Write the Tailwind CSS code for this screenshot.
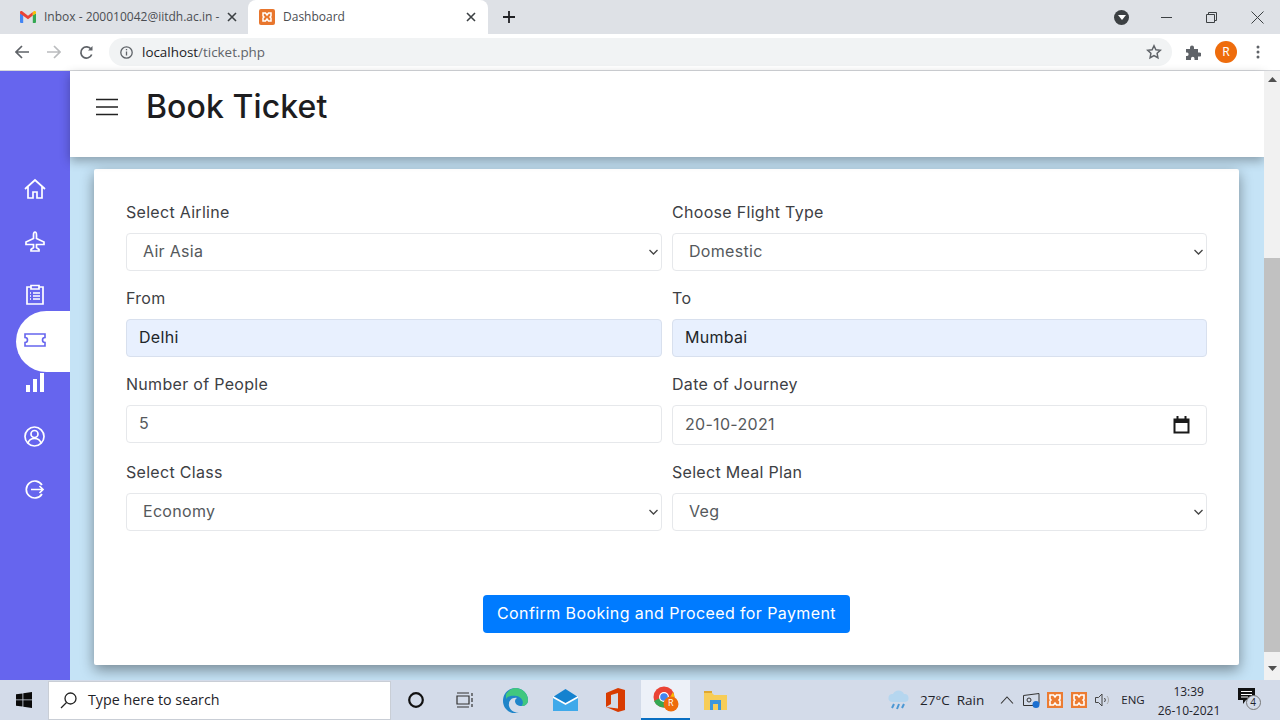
<!DOCTYPE html>
<html lang="en">
<head>
    <meta charset="UTF-8">
    <meta name="viewport" content="width=device-width, initial-scale=1.0">
    <script src="https://cdn.jsdelivr.net/npm/@tailwindcss/browser@4"></script>
    <title>Dashboard</title>
</head>
<body class="w-[1280px] h-[720px] overflow-hidden flex flex-col font-['Noto_Sans',sans-serif] bg-white">

    <!-- browser tabs -->
    <div class="h-[34px] shrink-0 bg-[#dee1e6] flex items-end pl-2 font-['Open_Sans',sans-serif] text-[12px] text-[#4a4d52]">
        <div class="w-[240px] h-[34px] flex items-center pl-3 pr-[11px]">
            <svg class="w-4 h-3 shrink-0" viewBox="0 0 16 12"><path d="M0 2.500V11a1 1 0 0 0 1 1h2.200V4z" fill="#4285f4"/><path d="M16 2.500V11a1 1 0 0 1-1 1h-2.200V4z" fill="#34a853"/><path d="M0 1.500C0 .2 1.500-.3 2.500.5L8 4.700 12.800 1v3.600L8 8.200 0 2.500z" fill="#ea4335"/><path d="M12.800 1l.7-.5C14.500-.3 16 .2 16 1.500v1l-3.200 2.100z" fill="#fbbc04"/></svg>
            <span class="ml-2 whitespace-nowrap">Inbox - 200010042@iitdh.ac.in -</span>
            <svg class="w-[10px] h-[10px] ml-auto" viewBox="0 0 10 10" stroke="#3c4043" stroke-width="1.600"><path d="M1 1l8 8M9 1l-8 8"/></svg>
        </div>
        <div class="w-[240px] h-[34px] bg-white rounded-t-lg flex items-center pl-[11px] pr-[12px]">
            <svg class="w-4 h-4 shrink-0" viewBox="0 0 16 16"><rect width="16" height="16" rx="2" fill="#e8762d"/><path d="M4 4h2.500l1.500 2 1.500-2H12v3l-1 1 1 1v3H9.500L8 10l-1.500 2H4V9l1-1-1-1z" fill="none" stroke="#fff" stroke-width="1.500"/></svg>
            <span class="ml-2">Dashboard</span>
            <svg class="w-[10px] h-[10px] ml-auto" viewBox="0 0 10 10" stroke="#3c4043" stroke-width="1.600"><path d="M1 1l8 8M9 1l-8 8"/></svg>
        </div>
        <div class="h-[34px] flex items-center ml-[15px]">
            <svg class="w-3 h-3" viewBox="0 0 12 12" stroke="#202124" stroke-width="1.800"><path d="M6 0v12M0 6h12"/></svg>
        </div>
        <div class="ml-auto h-[34px] flex items-center">
            <span class="w-[15px] h-[15px] rounded-full bg-[#3c4043] flex items-center justify-center">
                <svg class="w-2 h-[5px]" viewBox="0 0 8 5"><path d="M0 0h8L4 5z" fill="#fff"/></svg>
            </span>
            <svg class="w-[11px] h-[11px] ml-[32px]" viewBox="0 0 11 11" stroke="#3c4043"><path d="M0 5.500h11"/></svg>
            <svg class="w-[11px] h-[11px] ml-[34px]" viewBox="0 0 11 11" fill="none" stroke="#3c4043"><path d="M.5 2.500h8v8h-8zM2.500 2.500V.5h8v8H8.500"/></svg>
            <svg class="w-[13px] h-[13px] ml-[34px] mr-[16px]" viewBox="0 0 13 13" stroke="#3c4043"><path d="M.5.5l12 12M12.500.5l-12 12"/></svg>
        </div>
    </div>

    <!-- browser toolbar -->
    <div class="h-[37px] shrink-0 bg-white border-b border-[#d5d7db] flex items-center pl-[15px]">
        <svg class="w-[14px] h-[14px]" viewBox="0 0 14 14" fill="none" stroke="#5f6368" stroke-width="1.700"><path d="M14 7H1.500M7 1L1 7l6 6"/></svg>
        <svg class="w-[14px] h-[14px] ml-[18px]" viewBox="0 0 14 14" fill="none" stroke="#babcbe" stroke-width="1.700"><path d="M0 7h12.500M7 1l6 6-6 6"/></svg>
        <svg class="w-[15px] h-[15px] ml-[18px]" viewBox="0 0 15 15" fill="none" stroke="#5f6368" stroke-width="1.700"><path d="M12.700 9.500a5.600 5.600 0 1 1-.6-5.200"/><path d="M13.500 1v4.600H9z" fill="#5f6368" stroke="none"/></svg>
        <div class="ml-[15px] w-[1063px] h-[28px] rounded-full bg-[#f1f3f4] flex items-center pl-[11px] pr-[10px]">
            <svg class="w-[13px] h-[13px]" viewBox="0 0 13 13" fill="none" stroke="#5f6368" stroke-width="1.300"><circle cx="6.500" cy="6.500" r="5.700"/><path d="M6.500 5.500v4M6.500 3v1.300"/></svg>
            <span class="ml-[9px] text-[13.400px] text-[#202124] font-['Open_Sans',sans-serif]">localhost<span class="text-[#5f6368]">/ticket.php</span></span>
            <svg class="w-[16px] h-[16px] ml-auto" viewBox="0 0 16 16" fill="none" stroke="#5f6368" stroke-width="1.500"><path d="M8 1.800l1.900 4 4.400.5-3.200 3 .8 4.400L8 11.500l-3.900 2.200.8-4.400-3.200-3 4.400-.5z"/></svg>
        </div>
        <svg class="w-[15px] h-[15px] ml-[14px]" viewBox="0 0 15 15" fill="#5f6368"><path d="M0 4h4V2.500a2 2 0 0 1 4 0V4h4v3.500h1.500a2 2 0 0 1 0 4H12V15H8.500v-1.500a1.700 1.700 0 0 0-3.500 0V15H0v-4h1.200a1.800 1.800 0 0 0 0-3.500H0z"/></svg>
        <span class="ml-[14px] w-[22px] h-[22px] rounded-full bg-[#ee6c0c] text-white text-[12px] flex items-center justify-center">R</span>
        <svg class="w-[4px] h-[14px] ml-[19px]" viewBox="0 0 4 14" fill="#5f6368"><circle cx="2" cy="2" r="1.500"/><circle cx="2" cy="7" r="1.500"/><circle cx="2" cy="12" r="1.500"/></svg>
    </div>

    <!-- page -->
    <div class="flex-1 min-h-0 flex bg-[#c5e3f6]">
        <aside class="w-[70px] shrink-0 bg-[#6665ee] flex flex-col items-end text-white pt-[92px]">
            <div class="h-[52px] w-full flex items-center pl-[24px]">
                <svg class="w-[22px] h-[22px]" viewBox="0 0 22 22" fill="none" stroke="#fff" stroke-width="1.700"><path d="M1 11L11 2l10 9M4 9v11h5v-6h4v6h5V9"/></svg>
            </div>
            <div class="h-[53px] w-full flex items-center pl-[25px]">
                <svg class="w-[20px] h-[21px]" viewBox="0 0 20 21" fill="none" stroke="#fff" stroke-width="1.700"><path d="M10 1c1 0 1.500 1.500 1.500 3v3.500L19 11v2.500H11.500v3L14 18.500V20H6v-1.500l2.500-2v-3H1V11l7.500-3.500V4C8.500 2.500 9 1 10 1z"/></svg>
            </div>
            <div class="h-[52px] w-full flex items-center pl-[26px]">
                <svg class="w-[18px] h-[21px]" viewBox="0 0 18 21" fill="none" stroke="#fff" stroke-width="1.700"><path d="M5 3H1v17h16V3h-4"/><path d="M5 1.500h8v3.500H5zM4 9h1M7 9h7M4 12h1M7 12h7M4 15h1M7 15h7"/></svg>
            </div>
            <div class="h-[61px] w-[54px] bg-white rounded-l-[31px] flex items-center pl-[8px] pb-[3px] -mt-[9px]">
                <svg class="w-[22px] h-[14px]" viewBox="0 0 22 14" fill="none" stroke="#6665ee" stroke-width="1.600"><path d="M1 1h20v3.500a2.500 2.500 0 0 0 0 5V13H1V9.500a2.500 2.500 0 0 0 0-5z"/></svg>
            </div>
            <div class="h-[24px] w-full flex items-center pl-[26px] pb-[3px]">
                <svg class="w-[18px] h-[19px]" viewBox="0 0 18 19" fill="#fff"><path d="M0 12h4v7H0zM7 6h4v13H7zM14 0h4v19h-4z"/></svg>
            </div>
            <div class="h-[64px] w-full flex items-center pl-[24px] mt-[8px]">
                <svg class="w-[21px] h-[21px]" viewBox="0 0 21 21" fill="none" stroke="#fff" stroke-width="1.700"><circle cx="10.500" cy="10.500" r="9.500"/><circle cx="10.500" cy="8" r="3.500"/><path d="M4 17c1-3.500 3.500-4.500 6.500-4.500S16 13.500 17 17"/></svg>
            </div>
            <div class="h-[42px] w-full flex items-center pl-[25px]">
                <svg class="w-[20px] h-[19px]" viewBox="0 0 20 19" fill="none" stroke="#fff" stroke-width="1.700"><path d="M17 5A8.500 8.500 0 1 0 17 14"/><path d="M6 9.500h12M14.500 6l3.500 3.500-3.500 3.500"/></svg>
            </div>
        </aside>

        <main class="flex-1 min-w-0 flex flex-col">
            <header class="h-[86px] shrink-0 bg-white flex items-center pl-[26px] pb-[14px] shadow-[0_4px_10px_rgba(0,0,0,0.3)] relative">
                <svg class="w-[22px] h-[18px]" viewBox="0 0 22 18" stroke="#222" stroke-width="1.700"><path d="M0 1.500h22M0 9h22M0 16.500h22"/></svg>
                <h1 class="ml-[28px] text-[32px] leading-none font-medium text-[#1d1d1f] font-['Inter',sans-serif] tracking-[0.1px]">Book Ticket</h1>
            </header>
            <div class="w-[1145px] h-[496px] ml-[24px] mt-[12px] bg-white rounded-[2px] shadow-[0_5px_14px_rgba(0,0,0,0.4)] pl-[32px] pt-[33px] font-['Inter',sans-serif] text-[16px] tracking-[0.3px] text-[#3d4044]">
                <div class="grid grid-cols-[536px_535px] gap-x-[10px]">
                    <div class="h-[86px]">
                        <label class="block h-[31px] leading-[20px]">Select Airline</label>
                        <div class="relative">
                            <select class="block appearance-none w-full h-[38px] border border-[#e6e8eb] rounded-[4px] bg-white pl-[16px] pb-[2px] text-[#55595c]"><option>Air Asia</option></select>
                            <svg class="absolute right-[4px] top-[16px] w-[9px] h-[6px]" viewBox="0 0 9 6" fill="none" stroke="#444" stroke-width="1.300"><path d="M.5 1l4 4 4-4"/></svg>
                        </div>
                    </div>
                    <div class="h-[86px]">
                        <label class="block h-[31px] leading-[20px]">Choose Flight Type</label>
                        <div class="relative">
                            <select class="block appearance-none w-full h-[38px] border border-[#e6e8eb] rounded-[4px] bg-white pl-[16px] pb-[2px] text-[#55595c]"><option>Domestic</option></select>
                            <svg class="absolute right-[4px] top-[16px] w-[9px] h-[6px]" viewBox="0 0 9 6" fill="none" stroke="#444" stroke-width="1.300"><path d="M.5 1l4 4 4-4"/></svg>
                        </div>
                    </div>
                    <div class="h-[86px]">
                        <label class="block h-[31px] leading-[20px]">From</label>
                        <input class="block w-full h-[38px] border border-[#d8e0ee] rounded-[4px] bg-[#e8f0fe] pl-[12px] pb-[2px] text-[#212529]" type="text" value="Delhi">
                    </div>
                    <div class="h-[86px]">
                        <label class="block h-[31px] leading-[20px]">To</label>
                        <input class="block w-full h-[38px] border border-[#d8e0ee] rounded-[4px] bg-[#e8f0fe] pl-[12px] pb-[2px] text-[#212529]" type="text" value="Mumbai">
                    </div>
                    <div class="h-[88px]">
                        <label class="block h-[31px] leading-[20px]">Number of People</label>
                        <input class="block w-full h-[38px] border border-[#e6e8eb] rounded-[4px] bg-white pl-[12px] pb-[2px] text-[#55595c]" type="text" value="5">
                    </div>
                    <div class="h-[88px]">
                        <label class="block h-[31px] leading-[20px]">Date of Journey</label>
                        <div class="relative">
                            <input class="block w-full h-[40px] border border-[#e6e8eb] rounded-[4px] bg-white pl-[12px] pb-[2px] text-[#55595c]" type="text" value="20-10-2021">
                            <svg class="absolute right-[17px] top-[11px] w-[17px] h-[18px]" viewBox="0 0 17 18" fill="none" stroke="#1a1a1a" stroke-width="2"><path d="M1.500 3.500h14v13h-14zM4.500 0v3M12.500 0v3"/><path d="M1.500 5.500h14" stroke-width="3"/></svg>
                        </div>
                    </div>
                    <div>
                        <label class="block h-[31px] leading-[20px]">Select Class</label>
                        <div class="relative">
                            <select class="block appearance-none w-full h-[38px] border border-[#e6e8eb] rounded-[4px] bg-white pl-[16px] pb-[2px] text-[#55595c]"><option>Economy</option></select>
                            <svg class="absolute right-[4px] top-[16px] w-[9px] h-[6px]" viewBox="0 0 9 6" fill="none" stroke="#444" stroke-width="1.300"><path d="M.5 1l4 4 4-4"/></svg>
                        </div>
                    </div>
                    <div>
                        <label class="block h-[31px] leading-[20px]">Select Meal Plan</label>
                        <div class="relative">
                            <select class="block appearance-none w-full h-[38px] border border-[#e6e8eb] rounded-[4px] bg-white pl-[16px] pb-[2px] text-[#55595c]"><option>Veg</option></select>
                            <svg class="absolute right-[4px] top-[16px] w-[9px] h-[6px]" viewBox="0 0 9 6" fill="none" stroke="#444" stroke-width="1.300"><path d="M.5 1l4 4 4-4"/></svg>
                        </div>
                    </div>
                </div>
                <button type="button" class="block w-[367px] h-[38px] ml-[357px] mt-[64px] pb-[2px] bg-[#007bff] text-white rounded-[4px] whitespace-nowrap tracking-[0.4px]">Confirm Booking and Proceed for Payment</button>
            </div>
        </main>

        <div class="w-[16px] shrink-0 bg-[#f1f1f1] flex flex-col items-center relative">
            <svg class="w-[9px] h-[5px] mt-[6px]" viewBox="0 0 9 5"><path d="M0 5L4.500 0 9 5z" fill="#505050"/></svg>
            <div class="w-full h-[394px] bg-[#c1c1c1] mt-[176px]"></div>
            <svg class="w-[9px] h-[5px] mt-[14px]" viewBox="0 0 9 5"><path d="M0 0L4.500 5 9 0z" fill="#505050"/></svg>
        </div>
    </div>

    <!-- windows taskbar -->
    <div class="h-[40px] shrink-0 bg-[#d3dbe9] flex items-center font-['Open_Sans',sans-serif] text-[#1f2329] text-[13.500px]">
        <svg class="w-[16px] h-[16px] ml-[16px]" viewBox="0 0 16 16" fill="#0a0a0a"><path d="M0 2.300L6.500 1.400v6.100H0zM7.300 1.300L16 0v7.500H7.300zM0 8.300h6.500v6.300L0 13.700zM7.300 8.300H16V16l-8.700-1.300z"/></svg>
        <div class="w-[343px] h-[39px] ml-[16px] bg-white border border-[#c9ced6] flex items-center pl-[11px]">
            <svg class="w-[17px] h-[17px]" viewBox="0 0 17 17" fill="none" stroke="#222" stroke-width="1.300"><circle cx="10.500" cy="6.500" r="5.500"/><path d="M6.500 10.500L1 16"/></svg>
            <span class="ml-[11px] text-[14.300px]">Type here to search</span>
        </div>
        <svg class="w-[16px] h-[16px] ml-[17px]" viewBox="0 0 16 16" fill="none" stroke="#111" stroke-width="2.200"><circle cx="8" cy="8" r="6.800"/></svg>
        <svg class="w-[17px] h-[16px] ml-[32px]" viewBox="0 0 17 16" fill="none" stroke="#333" stroke-width="1.200"><path d="M1 1h12M1 15h12M1 4h12v8H1zM16 1v3M16 6v4M16 12v3"/></svg>
        <svg class="w-[25px] h-[25px] ml-[30px]" viewBox="0 0 25 25"><path d="M12.500 0C19 0 25 5 25 12c0 4-3 6-6.500 6S12 16 12 13c0-2 2-3 2-3-5-1-9 3-8 8 1 4 5 7 10 6.500C6 27 0 20 0 13 0 6 5 0 12.500 0z" fill="#1f85c9"/><path d="M3 6C6 2 9 0 12.500 0 19 0 25 5 25 12c0 4-3 6-6.500 6 3-3 1-9-5-10C9 7 5 8 3 11z" fill="#41c77e"/></svg>
        <svg class="w-[25px] h-[22px] ml-[25px]" viewBox="0 0 25 22"><path d="M0 8L12.500 0 25 8v14H0z" fill="#1582cf"/><path d="M0 8l12.500 8L25 8v14H0z" fill="#3fa9ea"/><path d="M0 7l12.500 7L25 7v2L12.500 16 0 9z" fill="#fff"/></svg>
        <svg class="w-[19px] h-[24px] ml-[28px]" viewBox="0 0 19 24"><path d="M0 5L12 0l7 2v20l-7 2L0 19l12 1.500V5L5 7v9l-5 3z" fill="#d83b01"/></svg>
        <div class="w-[49px] h-[40px] ml-[16px] bg-[#edf1f8] border-b-2 border-[#0a6fc2] flex items-center justify-center relative">
            <svg class="w-[26px] h-[26px]" viewBox="0 0 26 26"><circle cx="11" cy="11" r="10.500" fill="#ea4335"/><path d="M1 15A10.500 10.500 0 0 0 12 21.500L16 12H7z" fill="#34a853"/><path d="M20 6a10.500 10.500 0 0 1-6 15l2-8z" fill="#fbbc04"/><circle cx="11" cy="11" r="5" fill="#fff"/><circle cx="11" cy="11" r="3.800" fill="#4285f4"/><circle cx="18" cy="18" r="7.500" fill="#ee6c0c"/></svg>
            <span class="absolute left-[27px] top-[18px] text-[9px] text-white leading-none">R</span>
        </div>
        <svg class="w-[23px] h-[19px] ml-[14px]" viewBox="0 0 23 19"><path d="M0 2h8l2 2h13v15H0z" fill="#f7cd57"/><path d="M0 0h8v2H0z" fill="#e0a82f"/><path d="M6 9h11v10h-3v-6H9v6H6z" fill="#3a96dd"/></svg>

        <svg class="w-[24px] h-[22px] ml-[160px]" viewBox="0 0 24 22"><path d="M5 13a4 4 0 0 1 1-8 6 6 0 0 1 11 0 4 4 0 0 1 1 8z" fill="#b5d6ef"/><path d="M7 15l-2 4M12 15l-2 5M17 15l-2 4" stroke="#4b98d4" stroke-width="2"/></svg>
        <span class="ml-[9px] whitespace-nowrap">27°C</span>
        <span class="ml-[7px]">Rain</span>
        <svg class="w-[14px] h-[8px] ml-[16px]" viewBox="0 0 14 8" fill="none" stroke="#333" stroke-width="1.100"><path d="M1 7.500L7 1l6 6.500"/></svg>
        <svg class="w-[17px] h-[15px] ml-[9px]" viewBox="0 0 17 15" fill="none" stroke="#333"><path d="M.5 2.500L16 .5v10H12M.5 2.500v10H10"/><circle cx="6" cy="7" r="2"/><circle cx="13" cy="11.500" r="3.500" fill="#1c6fd0" stroke="none"/></svg>
        <svg class="w-[16px] h-[16px] ml-[7px]" viewBox="0 0 16 16"><rect width="16" height="16" fill="#ec7c32"/><path d="M3 3h3.500L8 5l1.500-2H13v4l-1 1 1 1v4H9.500L8 11l-1.500 2H3V9l1-1-1-1z" fill="none" stroke="#fff" stroke-width="1.600"/></svg>
        <svg class="w-[16px] h-[16px] ml-[8px]" viewBox="0 0 16 16"><rect width="16" height="16" fill="#ec7c32"/><path d="M3 3h3.500L8 5l1.500-2H13v4l-1 1 1 1v4H9.500L8 11l-1.500 2H3V9l1-1-1-1z" fill="none" stroke="#fff" stroke-width="1.600"/></svg>
        <svg class="w-[15px] h-[14px] ml-[8px]" viewBox="0 0 15 14" fill="none" stroke="#444"><path d="M.5 4.500h3L7 1v12L3.500 9.500h-3zM9.500 5a3 3 0 0 1 0 4"/><path d="M12 3a6 6 0 0 1 0 8" stroke="#aaa"/></svg>
        <span class="ml-[11px] text-[11.500px]">ENG</span>
        <div class="ml-[13px] w-[62px] text-[12px] leading-[19px] text-center flex flex-col pt-[2px]">
            <span>13:39</span>
            <span class="whitespace-nowrap">26-10-2021</span>
        </div>
        <div class="relative ml-[18px] w-[20px] h-[24px]">
            <svg class="w-[17px] h-[17px]" viewBox="0 0 17 17"><path d="M0 0h17v12H8l-3 4v-4H0z" fill="#111"/><path d="M3 3.500h11M3 6.500h11M3 9h7" stroke="#fff"/></svg>
            <span class="absolute left-[8px] top-[7px] w-[15px] h-[15px] rounded-full bg-[#d3dbe9] border border-[#777] text-[10px] leading-[13px] text-center">4</span>
        </div>
    </div>
</body>
</html>
